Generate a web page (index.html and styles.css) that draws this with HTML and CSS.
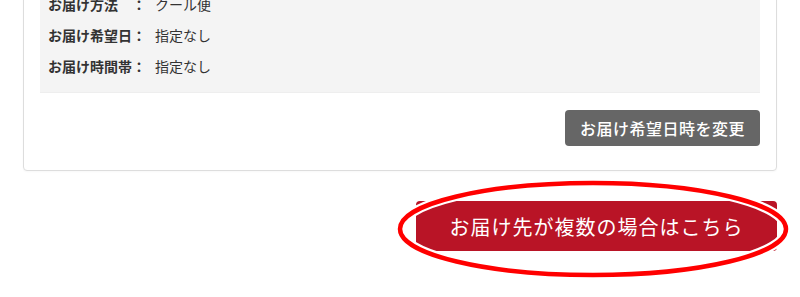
FILE: index.html
```html
<!DOCTYPE html>
<html lang="ja">
<head>
  <meta charset="UTF-8">
  <meta name="viewport" content="width=device-width, initial-scale=1.0">
  <title>お届け先</title>
  <link rel="stylesheet" href="styles.css">
</head>
<body>

<main class="page">
  <section class="delivery-card">
    <div class="delivery-info">
      <p class="info-row"><span class="info-label">お届け方法　：</span><span class="info-value">クール便</span></p>
      <p class="info-row"><span class="info-label">お届け希望日：</span><span class="info-value">指定なし</span></p>
      <p class="info-row"><span class="info-label">お届け時間帯：</span><span class="info-value">指定なし</span></p>
    </div>
    <div class="card-actions">
      <button class="btn-change">お届け希望日時を変更</button>
    </div>
  </section>

  <div class="multi-area">
    <div class="multi-wrap">
      <button class="btn-multi">お届け先が複数の場合はこちら</button>
      <svg class="highlight" viewBox="0 0 392 98" aria-hidden="true">
        <ellipse cx="196" cy="49" rx="193" ry="46" fill="none" stroke="#fff" stroke-width="9"/>
        <ellipse cx="196" cy="49" rx="193" ry="46" fill="none" stroke="#f00" stroke-width="4.5"/>
      </svg>
    </div>
  </div>
</main>

</body>
</html>
```

FILE: styles.css
```css
body {
  margin: 0;
  padding: 0;
  background-color: #fff;
  color: #333;
  font-family: "Noto Sans CJK JP", "Noto Sans", sans-serif;
}
.page {
  width: 754px;
  margin: -38px 0 0 23px;
  padding-bottom: 60px;
}
.delivery-card {
  border: 1px solid #ddd;
  border-radius: 0 0 4px 4px;
  background-color: #fff;
  padding: 16px 16px 24px 16px;
  box-shadow: 0 1px 2px rgba(0, 0, 0, 0.03);
}
.delivery-info {
  background-color: #f4f4f4;
  border-bottom: 1px solid #eee;
  padding: 10px 8px 10px 8px;
}
.info-row {
  margin: 0;
  font-size: 14px;
  line-height: 31px;
  height: 31px;
}
.info-label {
  font-weight: bold;
}
.info-value {
  margin-left: 9px;
}
.card-actions {
  display: flex;
  justify-content: flex-end;
  margin-top: 17px;
}
.btn-change {
  background-color: #666;
  color: #fff;
  border: none;
  border-radius: 4px;
  height: 36px;
  width: 195px;
  padding: 0;
  font-family: inherit;
  font-size: 16px;
  font-weight: 500;
  letter-spacing: 0.5px;
  cursor: pointer;
}
.multi-area {
  display: flex;
  justify-content: flex-end;
  margin-top: 30px;
}
.multi-wrap {
  position: relative;
}
.btn-multi {
  display: block;
  background-color: #b91426;
  color: #fff;
  border: none;
  border-radius: 4px;
  width: 361px;
  height: 50px;
  padding: 0;
  font-family: inherit;
  font-size: 20px;
  letter-spacing: 1px;
  cursor: pointer;
}
.highlight {
  position: absolute;
  left: -19px;
  top: -21px;
  width: 392px;
  height: 98px;
  pointer-events: none;
}
```
